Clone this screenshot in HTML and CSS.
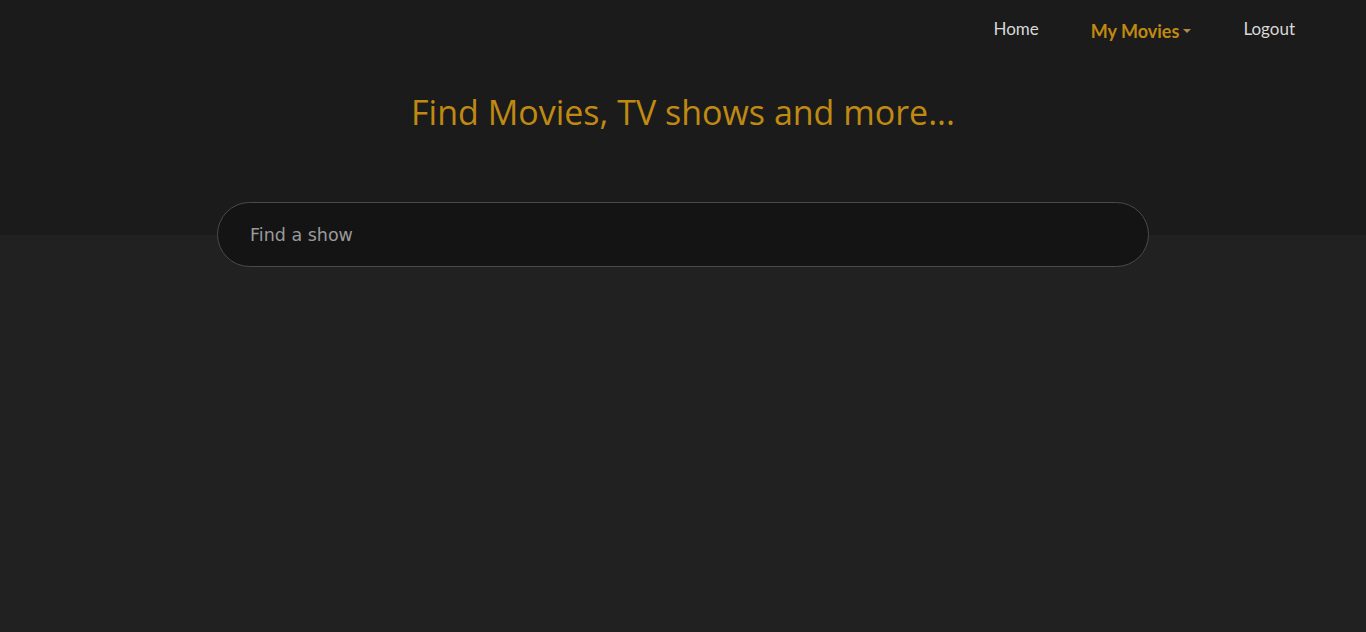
FILE: index.html
```html
<!DOCTYPE html>
<html lang="en">
<head>
<meta charset="utf-8">
<title>Find Movies</title>
<link rel="stylesheet" href="styles.css">
</head>
<body>
<header class="hero">
  <nav class="nav">
    <a class="nav-link" href="#">Home</a>
    <a class="nav-link nav-active" href="#">My Movies<span class="caret"></span></a>
    <a class="nav-link" href="#">Logout</a>
  </nav>
  <h1 class="title">Find Movies, TV shows and more...</h1>
</header>
<main class="search-wrap">
  <input class="search" type="text" placeholder="Find a show">
</main>
</body>
</html>
```
FILE: styles.css
```css
html, body {
  margin: 0;
  padding: 0;
}
body {
  background: #212121;
  min-height: 632px;
  font-family: "Open Sans", sans-serif;
}
.hero {
  background: #1b1b1b;
  height: 235px;
  box-sizing: border-box;
}
.nav {
  display: flex;
  justify-content: flex-end;
  align-items: center;
  padding: 16px 45px 0 0;
  height: 24px;
}
.nav-link {
  font-family: "Lato", sans-serif;
  font-size: 17px;
  color: #d8d8d8;
  text-decoration: none;
  padding: 0 26px;
  display: flex;
  align-items: center;
}
.nav-active {
  color: #c08a12;
  font-weight: bold;
  font-size: 18px;
  padding-top: 5px;
}
.caret {
  display: inline-block;
  width: 0;
  height: 0;
  border-left: 4.5px solid transparent;
  border-right: 4.5px solid transparent;
  border-top: 4.5px solid #b08a45;
  margin-left: 4px;
}
.title {
  margin: 49px 0 0;
  text-align: center;
  font-weight: normal;
  font-size: 34px;
  color: #c08a12;
  line-height: 46px;
}
.search-wrap {
  display: flex;
  justify-content: center;
  margin-top: -33px;
}
.search {
  width: 932px;
  height: 65px;
  box-sizing: border-box;
  background: #141414;
  border: 1px solid #4a4a4a;
  border-radius: 33px;
  padding: 0 32px;
  font-family: "DejaVu Sans", sans-serif;
  font-size: 17.5px;
  color: #ddd;
  outline: none;
}
.search::placeholder {
  color: #9a9a9a;
}
```
